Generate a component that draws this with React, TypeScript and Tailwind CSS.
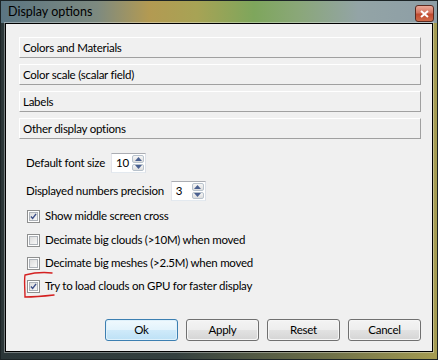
import React from "react";

const font = { fontFamily: 'Lato, "Segoe UI", Roboto, "Liberation Sans", sans-serif' };

const txt = "text-[11.5px] tracking-[-0.25px] text-black";

function SectionButton({ label }: { label: string }) {
  return (
    <div className={`h-[21px] flex items-center pl-[3px] bg-[#f0f0f0] border-t border-l border-t-white border-l-white border-r border-b border-r-[#a0a0a0] border-b-[#a0a0a0] ${txt}`}>
      {label}
    </div>
  );
}

function SpinBox({ value }: { value: string }) {
  return (
    <div className="w-[35px] h-[20px] flex bg-white border border-[#abadb3] border-l-[#e2e3ea] border-r-[#dbdfe6] border-b-[#e3e9ef]">
      <div className={`flex-1 flex items-center pl-[4px] ${txt}`}>{value}</div>
      <div className="w-[13px] flex flex-col gap-[1px] py-[1px] pr-[1px]">
        <div className="flex-1 flex items-center justify-center rounded-[2px] border border-[#b8c2cc] bg-[linear-gradient(#f6f6f6,#dedede)]">
          <svg width="7" height="4" viewBox="0 0 7 4"><path d="M0 4 L3.5 0 L7 4 Z" fill="#4a6090" /></svg>
        </div>
        <div className="flex-1 flex items-center justify-center rounded-[2px] border border-[#b8c2cc] bg-[linear-gradient(#f6f6f6,#dedede)]">
          <svg width="7" height="4" viewBox="0 0 7 4"><path d="M0 0 L3.5 4 L7 0 Z" fill="#4a6090" /></svg>
        </div>
      </div>
    </div>
  );
}

function CheckBox({ checked, label, mt }: { checked: boolean; label: string; mt: string }) {
  return (
    <div className={`h-[20px] flex items-center ${mt}`}>
      <div className="w-[13px] h-[13px] ml-[1px] border border-[#8e8f8f] bg-white p-[1px]">
        <div className="w-full h-full border border-[#aeb3b9] bg-[linear-gradient(135deg,#dcdcdc,#f8f8f8)] flex items-center justify-center">
          {checked && (
            <svg width="9" height="9" viewBox="0 0 9 9">
              <path d="M1.2 4.6 L3.4 7 L7.8 1.2" stroke="#3c4f88" strokeWidth="1.8" fill="none" />
            </svg>
          )}
        </div>
      </div>
      <span className={`ml-[5px] whitespace-nowrap ${txt}`}>{label}</span>
    </div>
  );
}

function DlgButton({ label, def }: { label: string; def?: boolean }) {
  return def ? (
    <div className="w-[73px] h-[22px] rounded-[3px] border border-[#3c7fb1] p-[1px] bg-[#dff1fb]">
      <div className={`w-full h-full rounded-[2px] flex items-center justify-center ${txt} bg-[linear-gradient(#eef8fd_0%,#e2f3fc_50%,#cfeafa_51%,#bfe2f6_100%)]`}>
        {label}
      </div>
    </div>
  ) : (
    <div className="w-[73px] h-[22px] rounded-[3px] border border-[#707070] p-[1px] bg-[#f6f6f6]">
      <div className={`w-full h-full rounded-[2px] flex items-center justify-center ${txt} bg-[linear-gradient(#f3f3f3_0%,#ededed_50%,#e2e2e2_51%,#d6d6d6_100%)]`}>
        {label}
      </div>
    </div>
  );
}

export default function App() {
  return (
    <div style={font} className="relative w-[438px] h-[360px] overflow-hidden flex flex-col bg-[linear-gradient(90deg,#2b3638_0%,#34403f_40%,#6e7048_75%,#a59c52_100%)] border border-[#1c2426]">
      {/* title bar */}
      <div className="h-[22px] flex items-center justify-between pl-[7px] pr-[3px] bg-[linear-gradient(90deg,#5b7582_0%,#7d8a80_22%,#b39a52_34%,#a7a355_45%,#7ea65c_58%,#8aa778_68%,#93a4a6_82%,#8d9ea6_100%)]">
        <span className="text-[12.5px] text-black">Display options</span>
        <div className="w-[19px] h-[17px] mt-[3px] rounded-[3px] border border-[#5a2a20] bg-[linear-gradient(#e9a898_0%,#d47560_45%,#c04a30_55%,#d06a48_100%)] flex items-center justify-center">
          <svg width="9" height="8" viewBox="0 0 9 8">
            <path d="M1 1 L8 7 M8 1 L1 7" stroke="white" strokeWidth="2" />
          </svg>
        </div>
      </div>
      {/* client */}
      <div className="flex-1 mx-[4px] mb-[7px] mt-[0px] border border-black shadow-[0_0_0_1px_rgba(255,255,255,0.35)] bg-[#f0f0f0] flex flex-col pt-[13px] pl-[13px] pr-[11px] pb-[10px]">
        <div className="flex flex-col gap-[6px]">
          <SectionButton label="Colors and Materials" />
          <SectionButton label="Color scale (scalar field)" />
          <SectionButton label="Labels" />
          <SectionButton label="Other display options" />
        </div>
        <div className="pl-[7px] mt-[14px] flex flex-col">
          <div className="h-[20px] flex items-center">
            <span className={txt}>Default font size</span>
            <div className="ml-[6px]"><SpinBox value="10" /></div>
          </div>
          <div className="h-[20px] flex items-center mt-[8px]">
            <span className={txt}>Displayed numbers precision</span>
            <div className="ml-[7px]"><SpinBox value="3" /></div>
          </div>
          <CheckBox checked label="Show middle screen cross" mt="mt-[5px]" />
          <CheckBox checked={false} label="Decimate big clouds (>10M) when moved" mt="mt-[4px]" />
          <CheckBox checked={false} label="Decimate big meshes (>2.5M) when moved" mt="mt-[3px]" />
          <CheckBox checked label="Try to load clouds on GPU for faster display" mt="mt-[3px]" />
        </div>
        <div className="flex-1" />
        <div className="flex justify-end gap-[8px]">
          <DlgButton label="Ok" def />
          <DlgButton label="Apply" />
          <DlgButton label="Reset" />
          <DlgButton label="Cancel" />
        </div>
      </div>
      {/* red annotation */}
      <svg className="absolute left-[18px] top-[266px]" width="40" height="34" viewBox="0 0 40 34">
        <path d="M33 6 C 24 5, 14 6, 6 8 C 5 14, 6 22, 6 30 C 16 30, 26 29, 35 28" stroke="#d42020" strokeWidth="1.4" fill="none" strokeLinecap="round" />
      </svg>
    </div>
  );
}
